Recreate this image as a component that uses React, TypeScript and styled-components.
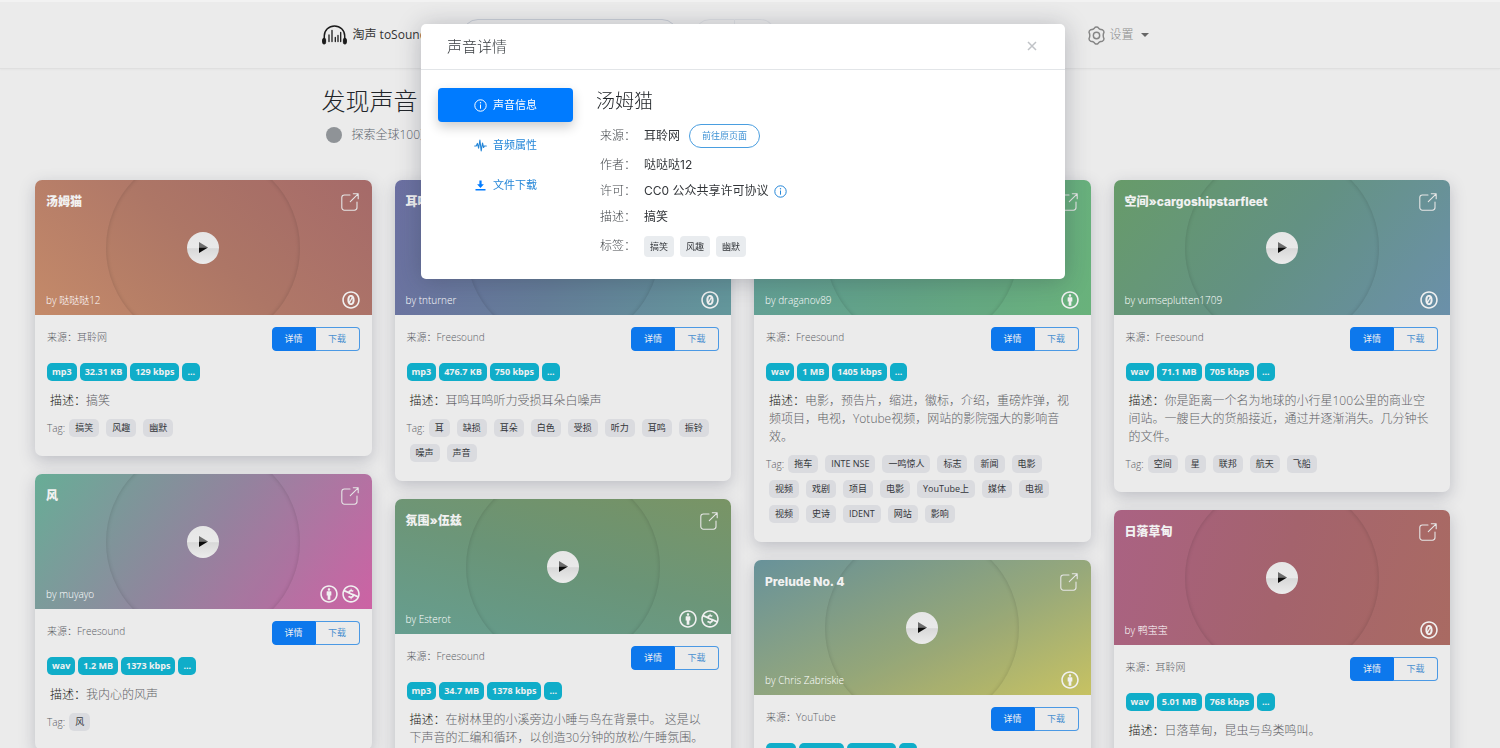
import React from 'react';
import styled, { createGlobalStyle } from 'styled-components';
import {
  FaCreativeCommonsBy,
  FaCreativeCommonsNc,
  FaCreativeCommonsZero,
} from 'react-icons/fa';

const GlobalStyle = createGlobalStyle`
  *, *::before, *::after { box-sizing: border-box; }
  body {
    margin: 0;
    overflow: hidden;
    background: #ebebeb;
    color: #212529;
    font-family: "Open Sans", "Noto Sans CJK SC", sans-serif;
    font-size: 12px;
    line-height: 18px;
  }
  h1, h2, h3, p, dl, dd, ul { margin: 0; padding: 0; }
  button, input { font: inherit; }
  a { text-decoration: none; }
`;

const Page = styled.div`
  min-height: 100vh;
  border-top: 2px solid #f2f2f2;
`;

/* ---------- site header ---------- */

const Header = styled.header`
  height: 67px;
  padding-right: 15px;
  border-bottom: 1px solid #dfdfdf;
  box-shadow: 0 1px 2px rgba(0, 0, 0, 0.03);
`;

const Container = styled.div`
  width: 100%;
  max-width: 874px;
  margin: 0 auto;
  padding: 0 16px;
`;

const HeaderBar = styled(Container)`
  display: grid;
  grid-template-columns: 140px 216px 1fr auto;
  align-items: center;
  height: 66px;
`;

const Brand = styled.a`
  display: flex;
  align-items: center;
  gap: 6px;
  color: #333;
  white-space: nowrap;
`;

const Search = styled.input`
  width: 100%;
  height: 32px;
  padding: 0 14px;
  border: 1px solid #c9ced6;
  border-radius: 16px;
  background: transparent;
`;

const FilterGroup = styled.div`
  display: flex;
  margin-left: 16px;
`;

const FilterButton = styled.button<{ $side: 'left' | 'right' }>`
  width: 41px;
  height: 32px;
  border: 1px solid #dddfe2;
  border-left-width: ${(p) => (p.$side === 'left' ? 1 : 0)}px;
  border-radius: ${(p) => (p.$side === 'left' ? '16px 0 0 16px' : '0 16px 16px 0')};
  background: transparent;
`;

const SettingsButton = styled.button`
  display: flex;
  align-items: center;
  gap: 3px;
  margin-right: 15px;
  padding: 0;
  border: 0;
  background: none;
  color: #8c8c8c;
  font-weight: 300;
`;

const Caret = styled.span`
  margin-left: 4px;
  border: 4px solid transparent;
  border-top-color: #666;
  border-bottom-width: 0;
`;

/* ---------- intro ---------- */

const Intro = styled.section`
  padding: 14px 15px 0 0;
`;

const IntroTitle = styled.h1`
  font-size: 24px;
  font-weight: 300;
  line-height: 36px;
`;

const IntroText = styled.p`
  display: flex;
  align-items: center;
  gap: 10px;
  margin-top: 7px;
  padding-left: 4px;
  color: #5c646c;
  font-weight: 300;
`;

const Dot = styled.span`
  width: 16px;
  height: 16px;
  border-radius: 50%;
  background: #8f9397;
`;

/* ---------- cards ---------- */

const Board = styled.main`
  display: grid;
  grid-template-columns: repeat(4, minmax(0, 1fr));
  gap: 23px;
  padding: 36px 50px 18px 35px;
`;

const Column = styled.div`
  display: flex;
  flex-direction: column;
  gap: 18px;
`;

const CardBox = styled.article`
  overflow: hidden;
  border-radius: 7px;
  background: #ebebeb;
  box-shadow: 0 5px 16px rgba(60, 66, 87, 0.26);
`;

const Banner = styled.div<{ $fill: string }>`
  position: relative;
  display: flex;
  flex-direction: column;
  justify-content: space-between;
  height: 135px;
  padding: 13px 12px 6px 11px;
  overflow: hidden;
  background: ${(p) => p.$fill};
  color: #f1f1f1;
`;

const Disc = styled.div`
  position: absolute;
  top: 50%;
  left: 50%;
  display: grid;
  place-items: center;
  width: 194px;
  height: 194px;
  border-radius: 50%;
  background: rgba(0, 0, 0, 0.01);
  box-shadow: inset 0 0 4px rgba(0, 0, 0, 0.17);
  transform: translate(-50%, -50%);
`;

const PlayButton = styled.button`
  display: grid;
  place-items: center;
  width: 32px;
  height: 32px;
  padding: 0;
  border: 0;
  border-radius: 50%;
  background: linear-gradient(#e6e6e6 0%, #e9e9e9 50%, #d8d8d8 52%, #ececec 100%);
`;

const BannerRow = styled.div`
  position: relative;
  display: flex;
  align-items: center;
  justify-content: space-between;
  pointer-events: none;
`;

const CardTitle = styled.h2`
  font-family: Inter, "Noto Sans CJK SC", sans-serif;
  font-size: 12px;
  font-weight: 800;
  line-height: 18px;
`;

const OpenLink = styled.a`
  display: flex;
  margin-right: 1px;
  color: #e6e6e6;
`;

const Author = styled.span`
  color: #fff;
  font-size: 10px;
  font-weight: 300;
  line-height: 16px;
`;

const Licenses = styled.span`
  display: flex;
  gap: 4px;
  font-size: 18px;
`;

const CardBody = styled.div`
  padding: 12px 12px 19px;
`;

const SourceRow = styled.div`
  display: flex;
  justify-content: space-between;
`;

const Source = styled.span`
  color: #5c6066;
  font-size: 10px;
  font-weight: 300;
  line-height: 20px;
`;

const ButtonGroup = styled.div`
  display: flex;
  height: 24px;
`;

const CardButton = styled.button<{ $primary?: boolean }>`
  width: 44px;
  padding: 0;
  border: 1px solid ${(p) => (p.$primary ? '#0d78ec' : '#4b99e4')};
  border-left-width: ${(p) => (p.$primary ? 1 : 0)}px;
  border-radius: ${(p) => (p.$primary ? '4px 0 0 4px' : '0 4px 4px 0')};
  background: ${(p) => (p.$primary ? '#0d78ec' : 'transparent')};
  color: ${(p) => (p.$primary ? '#f0f0f0' : '#4a90d0')};
  font-size: 9px;
`;

const Badges = styled.div`
  display: flex;
  gap: 3px;
  margin-top: 12px;
`;

const Badge = styled.span`
  padding: 0 5px;
  border-radius: 5px;
  background: #10adc9;
  color: #f1f1f1;
  font-size: 9px;
  font-weight: 700;
  line-height: 18px;
`;

const Description = styled.p`
  margin-top: 11px;
  padding: 0 8px 0 3px;
  color: #5f6266;
  font-weight: 300;
`;

const DescriptionLabel = styled.span`
  color: #1c1e20;
`;

const Tags = styled.div`
  display: flex;
  flex-wrap: wrap;
  gap: 7px 1px;
  margin-top: 9px;
`;

const TagLabel = styled.span`
  color: #5c6066;
  font-size: 10px;
  font-weight: 300;
`;

const Tag = styled.span`
  margin: 0 3px;
  padding: 0 6px;
  border-radius: 5px;
  background: #dadbdf;
  color: #33363a;
  font-size: 9px;
  line-height: 18px;
`;

/* ---------- dialog ---------- */

const Overlay = styled.div`
  position: fixed;
  inset: 0;
  display: flex;
  align-items: flex-start;
  justify-content: center;
  padding: 24px 14px 0 0;
`;

const Dialog = styled.section`
  width: 100%;
  max-width: 644px;
  border-radius: 5px;
  background: #fff;
  box-shadow: 0 2px 24px rgba(40, 44, 60, 0.28);
`;

const DialogHeader = styled.header`
  display: flex;
  align-items: center;
  justify-content: space-between;
  height: 46px;
  padding: 0 28px 2px 26px;
  border-bottom: 1px solid #e2e5e8;
`;

const DialogTitle = styled.h2`
  color: #3c4044;
  font-size: 15px;
  font-weight: 300;
  line-height: 24px;
`;

const CloseButton = styled.button`
  display: flex;
  padding: 0;
  border: 0;
  background: none;
  color: #c0c3c7;
`;

const DialogBody = styled.div`
  display: grid;
  grid-template-columns: 135px 1fr;
  gap: 23px;
  padding: 18px 17px 17px;
`;

const TabList = styled.div`
  display: flex;
  flex-direction: column;
  gap: 6px;
`;

const Tab = styled.button<{ $active?: boolean }>`
  display: flex;
  align-items: center;
  justify-content: center;
  gap: 6px;
  height: 34px;
  padding: 0;
  border: 0;
  border-radius: 4px;
  background: ${(p) => (p.$active ? '#007bff' : 'transparent')};
  box-shadow: ${(p) => (p.$active ? '0 5px 12px rgba(0, 0, 0, 0.2)' : 'none')};
  color: ${(p) => (p.$active ? '#fff' : '#2486d8')};
  font-size: 11px;
`;

const SoundName = styled.h3`
  font-size: 19px;
  font-weight: 300;
  line-height: 26px;
`;

const Facts = styled.dl`
  display: grid;
  grid-template-columns: 41px 1fr;
  grid-template-rows: 32px 26px 26px 26px 32px;
  align-items: center;
  margin-top: 6px;
  padding-left: 4px;
`;

const Term = styled.dt`
  padding-bottom: 1px;
  color: #45494d;
  font-weight: 300;
  white-space: nowrap;
`;

const Value = styled.dd`
  display: flex;
  align-items: center;
  gap: 6px;
  padding-left: 3px;
  color: #33363a;
  font-family: Inter, "Noto Sans CJK SC", sans-serif;
`;

const OriginButton = styled.a`
  margin-left: 3px;
  padding: 0 12px;
  border: 1px solid #4a9ee0;
  border-radius: 12px;
  color: #3f92d4;
  font-size: 9px;
  line-height: 22px;
`;

const LicenseInfo = styled.a`
  display: flex;
  color: #2486d8;
`;

const DialogTag = styled.span`
  padding: 0 6px;
  border-radius: 4px;
  background: #e9ecef;
  color: #33363a;
  font-size: 9px;
  line-height: 21px;
`;

/* ---------- drawings ---------- */

const HeadphonesLogo = () => (
  <svg width="25" height="20" viewBox="0 0 25 20" fill="none" stroke="#1b1b1b" aria-hidden="true">
    <path d="M2.300 14V10.800a10.200 9.900 0 0 1 20.400 0V14" strokeWidth="1.500" />
    <rect x="0.600" y="13.200" width="3" height="5.800" rx="1.500" fill="#1b1b1b" strokeWidth="1" />
    <rect x="21.400" y="13.200" width="3" height="5.800" rx="1.500" fill="#1b1b1b" strokeWidth="1" />
    <path
      d="M7 10v6.500M10 5.500v11M13.300 12.500v4M16 10.500v6M18.700 7.500v9"
      strokeWidth="1.300"
      strokeLinecap="round"
    />
  </svg>
);

const GearIcon = () => (
  <svg width="19" height="19" viewBox="0 0 24 24" fill="none" stroke="#858585" strokeWidth="1.800" strokeLinejoin="round" aria-hidden="true">
    <path d="M10.3 1.6Q12 .8 13.7 1.6Q15.4 4.9 19.6 4.8Q21.4 5.7 21.5 7.8Q19.4 12 21.5 16.2Q21.4 18.3 19.6 19.2Q15.4 19.1 13.7 22.4Q12 23.2 10.3 22.4Q8.6 19.1 4.4 19.2Q2.6 18.3 2.5 16.2Q4.6 12 2.5 7.8Q2.6 5.700 4.4 4.8Q8.6 4.9 10.3 1.6Z" />
    <circle cx="12" cy="12" r="4" />
  </svg>
);

const OpenIcon = () => (
  <svg width="18" height="18" viewBox="0 0 18 18" fill="none" stroke="currentColor" strokeWidth="1.100" strokeLinecap="round" strokeLinejoin="round" aria-hidden="true">
    <path d="M9 2H3.400A2.600 2.600 0 0 0 .8 4.600v10A2.600 2.600 0 0 0 3.400 17.200h10a2.600 2.600 0 0 0 2.600-2.600V9" />
    <path d="M9.300 8.600 17.200.8M12.300.8h4.900v4.900" />
  </svg>
);

const PlayGlyph = () => (
  <svg width="10" height="11" viewBox="0 0 10 11" aria-hidden="true">
    <path d="M1 0 10 5.500H1Z" fill="#6e6e6e" />
    <path d="M1 5.500H10L1 11Z" fill="#0a0a0a" />
  </svg>
);

const InfoIcon = () => (
  <svg width="13" height="13" viewBox="0 0 13 13" fill="none" stroke="currentColor" aria-hidden="true">
    <circle cx="6.500" cy="6.500" r="5.700" />
    <path d="M6.500 5.500v4.200" />
    <circle cx="6.500" cy="3.700" r=".7" fill="currentColor" stroke="none" />
  </svg>
);

const WaveIcon = () => (
  <svg width="13" height="13" viewBox="0 0 13 13" fill="none" stroke="currentColor" strokeWidth="1.100" strokeLinecap="round" strokeLinejoin="round" aria-hidden="true">
    <path d="M.7 7h1.500l1.200-2.600 1.200 4.800L5.900 1l1.300 11 1.300-8 1.100 4.500.8-1.500h1.900" />
  </svg>
);

const DownloadIcon = () => (
  <svg width="13" height="13" viewBox="0 0 13 13" fill="#007bff" aria-hidden="true">
    <path d="M5.400 1.500h2.200v3.800h2.300L6.500 9 3.100 5.300h2.300Z" />
    <rect x="1.500" y="10" width="10" height="1.500" />
  </svg>
);

const CloseIcon = () => (
  <svg width="10" height="10" viewBox="0 0 10 10" fill="none" stroke="currentColor" strokeWidth="1.500" aria-hidden="true">
    <path d="M1 1l8 8M9 1 1 9" />
  </svg>
);

/* ---------- data ---------- */

type License = 'zero' | 'by' | 'nc';

interface Sound {
  title: string;
  author: string;
  source: string;
  fill: string;
  licenses: License[];
  badges: string[];
  description: string;
  tags: string[];
}

const licenseIcons = {
  zero: FaCreativeCommonsZero,
  by: FaCreativeCommonsBy,
  nc: FaCreativeCommonsNc,
};

const columns: Sound[][] = [
  [
    {
      title: '汤姆猫',
      author: '哒哒哒12',
      source: '耳聆网',
      fill: 'linear-gradient(42deg, #c48a69, #b07868 50%, #a56a69)',
      licenses: ['zero'],
      badges: ['mp3', '32.31 KB', '129 kbps', '...'],
      description: '搞笑',
      tags: ['搞笑', '风趣', '幽默'],
    },
    {
      title: '风',
      author: 'muyayo',
      source: 'Freesound',
      fill: 'linear-gradient(125deg, #67ad96, #9585a0 50%, #cd62a4)',
      licenses: ['by', 'nc'],
      badges: ['wav', '1.2 MB', '1373 kbps', '...'],
      description: '我内心的风声',
      tags: ['风'],
    },
  ],
  [
    {
      title: '耳鸣',
      author: 'tnturner',
      source: 'Freesound',
      fill: 'linear-gradient(110deg, #6c70a2, #667f9a 50%, #63979b)',
      licenses: ['zero'],
      badges: ['mp3', '476.7 KB', '750 kbps', '...'],
      description: '耳鸣耳鸣听力受损耳朵白噪声',
      tags: ['耳', '缺损', '耳朵', '白色', '受损', '听力', '耳鸣', '振铃', '噪声', '声音'],
    },
    {
      title: '氛围»伍兹',
      author: 'Esterot',
      source: 'Freesound',
      fill: 'linear-gradient(15deg, #669e90, #6c9679 50%, #799465)',
      licenses: ['by', 'nc'],
      badges: ['mp3', '34.7 MB', '1378 kbps', '...'],
      description: '在树林里的小溪旁边小睡与鸟在背景中。 这是以下声音的汇编和循环，以创造30分钟的放松/午睡氛围。',
      tags: ['鸟', '溪流', '森林'],
    },
  ],
  [
    {
      title: '电影预告片',
      author: 'draganov89',
      source: 'Freesound',
      fill: 'linear-gradient(100deg, #629f96, #65a687 50%, #69b27b)',
      licenses: ['by'],
      badges: ['wav', '1 MB', '1405 kbps', '...'],
      description: '电影，预告片，缩进，徽标，介绍，重磅炸弹，视频项目，电视，Yotube视频，网站的影院强大的影响音效。',
      tags: [
        '拖车', 'INTE NSE', '一鸣惊人', '标志', '新闻', '电影',
        '视频', '戏剧', '项目', '电影', 'YouTube上', '媒体', '电视',
        '视频', '史诗', 'IDENT', '网站', '影响',
      ],
    },
    {
      title: 'Prelude No. 4',
      author: 'Chris Zabriskie',
      source: 'YouTube',
      fill: 'linear-gradient(155deg, #68929a, #96a87b 55%, #c7c262)',
      licenses: ['by'],
      badges: ['mp3', '4.56 MB', '320 kbps', '...'],
      description: '钢琴前奏曲',
      tags: ['钢琴'],
    },
  ],
  [
    {
      title: '空间»cargoshipstarfleet',
      author: 'vumseplutten1709',
      source: 'Freesound',
      fill: 'linear-gradient(130deg, #679b69, #659385 50%, #6b90aa)',
      licenses: ['zero'],
      badges: ['wav', '71.1 MB', '705 kbps', '...'],
      description: '你是距离一个名为地球的小行星100公里的商业空间站。一艘巨大的货船接近，通过并逐渐消失。几分钟长的文件。',
      tags: ['空间', '星', '联邦', '航天', '飞船'],
    },
    {
      title: '日落草甸',
      author: '鸭宝宝',
      source: '耳聆网',
      fill: 'linear-gradient(105deg, #aa6283, #a6656f 50%, #a96a62)',
      licenses: ['zero'],
      badges: ['wav', '5.01 MB', '768 kbps', '...'],
      description: '日落草甸，昆虫与鸟类鸣叫。',
      tags: ['昆虫', '鸟'],
    },
  ],
];

const SoundCard = ({ sound }: { sound: Sound }) => (
  <CardBox>
    <Banner $fill={sound.fill}>
      <Disc>
        <PlayButton type="button" aria-label={`播放 ${sound.title}`}>
          <PlayGlyph />
        </PlayButton>
      </Disc>
      <BannerRow>
        <CardTitle>{sound.title}</CardTitle>
        <OpenLink href="#open" aria-label="打开">
          <OpenIcon />
        </OpenLink>
      </BannerRow>
      <BannerRow>
        <Author>by {sound.author}</Author>
        <Licenses>
          {sound.licenses.map((name) => {
            const Icon = licenseIcons[name];
            return <Icon key={name} />;
          })}
        </Licenses>
      </BannerRow>
    </Banner>
    <CardBody>
      <SourceRow>
        <Source>来源：{sound.source}</Source>
        <ButtonGroup>
          <CardButton type="button" $primary>详情</CardButton>
          <CardButton type="button">下载</CardButton>
        </ButtonGroup>
      </SourceRow>
      <Badges>
        {sound.badges.map((badge) => (
          <Badge key={badge}>{badge}</Badge>
        ))}
      </Badges>
      <Description>
        <DescriptionLabel>描述：</DescriptionLabel>
        {sound.description}
      </Description>
      <Tags>
        <TagLabel>Tag:</TagLabel>
        {sound.tags.map((tag, i) => (
          <Tag key={i}>{tag}</Tag>
        ))}
      </Tags>
    </CardBody>
  </CardBox>
);

const SoundDialog = () => (
  <Overlay>
    <Dialog role="dialog" aria-labelledby="dialog-title">
      <DialogHeader>
        <DialogTitle id="dialog-title">声音详情</DialogTitle>
        <CloseButton type="button" aria-label="关闭">
          <CloseIcon />
        </CloseButton>
      </DialogHeader>
      <DialogBody>
        <TabList role="tablist">
          <Tab type="button" role="tab" aria-selected="true" $active>
            <InfoIcon />
            声音信息
          </Tab>
          <Tab type="button" role="tab">
            <WaveIcon />
            音频属性
          </Tab>
          <Tab type="button" role="tab">
            <DownloadIcon />
            文件下载
          </Tab>
        </TabList>
        <div>
          <SoundName>汤姆猫</SoundName>
          <Facts>
            <Term>来源：</Term>
            <Value>
              耳聆网
              <OriginButton href="#origin">前往原页面</OriginButton>
            </Value>
            <Term>作者：</Term>
            <Value>哒哒哒12</Value>
            <Term>许可：</Term>
            <Value>
              CC0 公众共享许可协议
              <LicenseInfo href="#license" aria-label="许可说明">
                <InfoIcon />
              </LicenseInfo>
            </Value>
            <Term>描述：</Term>
            <Value>搞笑</Value>
            <Term>标签：</Term>
            <Value>
              <DialogTag>搞笑</DialogTag>
              <DialogTag>风趣</DialogTag>
              <DialogTag>幽默</DialogTag>
            </Value>
          </Facts>
        </div>
      </DialogBody>
    </Dialog>
  </Overlay>
);

export default function App() {
  return (
    <>
      <GlobalStyle />
      <Page>
        <Header>
          <HeaderBar>
            <Brand href="#home">
              <HeadphonesLogo />
              淘声 toSound
            </Brand>
            <Search type="search" aria-label="搜索声音" />
            <FilterGroup>
              <FilterButton type="button" $side="left" aria-label="筛选" />
              <FilterButton type="button" $side="right" aria-label="排序" />
            </FilterGroup>
            <SettingsButton type="button">
              <GearIcon />
              设置
              <Caret />
            </SettingsButton>
          </HeaderBar>
        </Header>
        <Intro>
          <Container>
            <IntroTitle>发现声音</IntroTitle>
            <IntroText>
              <Dot />
              探索全球100万音频
            </IntroText>
          </Container>
        </Intro>
        <Board>
          {columns.map((sounds, i) => (
            <Column key={i}>
              {sounds.map((sound) => (
                <SoundCard key={sound.title} sound={sound} />
              ))}
            </Column>
          ))}
        </Board>
      </Page>
      <SoundDialog />
    </>
  );
}
